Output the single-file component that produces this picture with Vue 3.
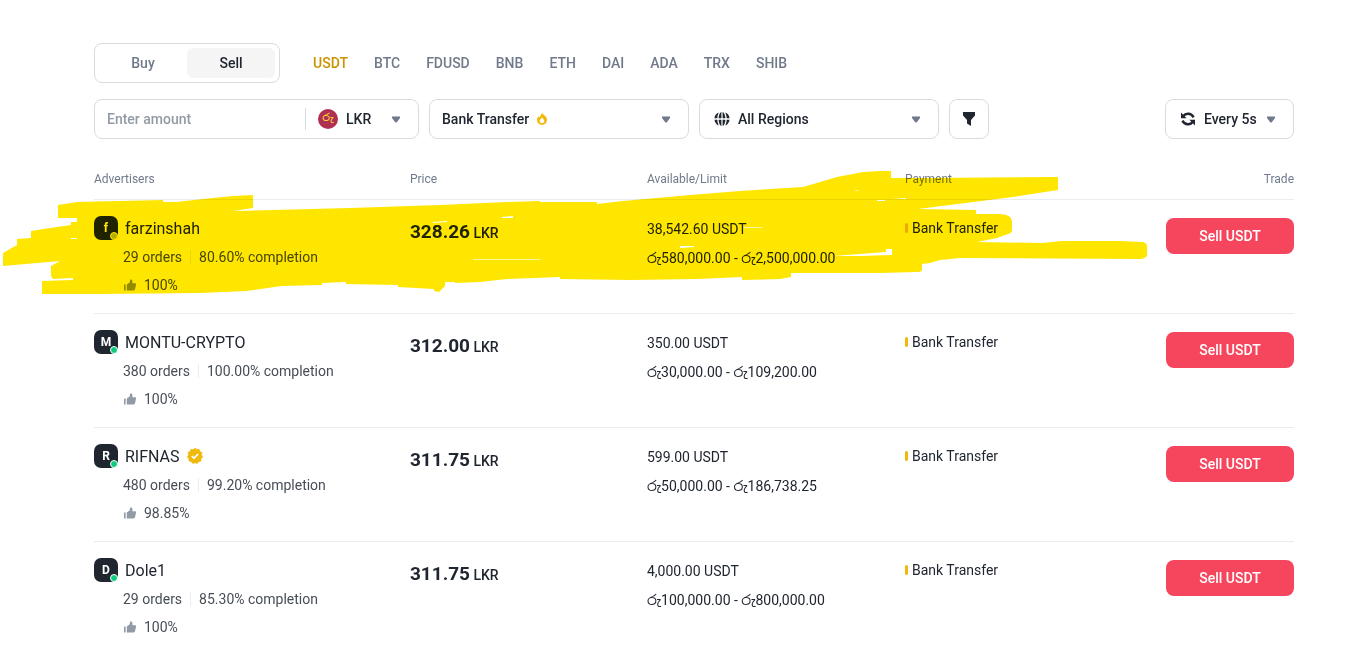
<script setup>
import { ref } from 'vue'

const sides = ['Buy', 'Sell']
const side = ref('Sell')
const coins = ['USDT', 'BTC', 'FDUSD', 'BNB', 'ETH', 'DAI', 'ADA', 'TRX', 'SHIB']
const coin = ref('USDT')
const amount = ref('')

const ads = [
  { name: 'farzinshah', orders: 29, rate: '80.60%', likes: '100%', price: '328.26', available: '38,542.60', min: '580,000.00', max: '2,500,000.00', away: true },
  { name: 'MONTU-CRYPTO', orders: 380, rate: '100.00%', likes: '100%', price: '312.00', available: '350.00', min: '30,000.00', max: '109,200.00' },
  { name: 'RIFNAS', orders: 480, rate: '99.20%', likes: '98.85%', price: '311.75', available: '599.00', min: '50,000.00', max: '186,738.25', verified: true },
  { name: 'Dole1', orders: 29, rate: '85.30%', likes: '100%', price: '311.75', available: '4,000.00', min: '100,000.00', max: '800,000.00' },
]
</script>

<template>
  <main class="page">
    <nav class="top">
      <div class="toggle">
        <button v-for="s in sides" :key="s" type="button" :class="{ on: s === side }" @click="side = s">{{ s }}</button>
      </div>
      <div class="coins">
        <button v-for="c in coins" :key="c" type="button" :class="{ on: c === coin }" @click="coin = c">{{ c }}</button>
      </div>
    </nav>

    <div class="filters">
      <div class="field amount">
        <input v-model="amount" type="text" placeholder="Enter amount" aria-label="Enter amount" />
        <div class="pick fiat">
          <span class="coin" aria-hidden="true">රු</span>
          <select aria-label="Currency"><option>LKR</option></select>
          <svg class="caret" viewBox="0 0 10 7" aria-hidden="true"><path d="M1 .5H9V2L5.8 6.2Q5 6.9 4.2 6.2L1 2Z" fill="#707a8a" /></svg>
        </div>
      </div>
      <div class="field pick method">
        <select aria-label="Payment method"><option>Bank Transfer</option></select>
        <svg class="flame" viewBox="0 0 10 12" aria-hidden="true">
          <path fill-rule="evenodd" d="M5 0L8.600 3.600C9.500 4.600 10 5.700 10 7A5 5 0 0 1 0 7C0 5.700.5 4.600 1.400 3.600L2.500 4.200ZM5 4.400L3.400 6.200A2.300 2.300 0 1 0 6.600 6.200Z" fill="#f0b90b" />
        </svg>
        <svg class="caret" viewBox="0 0 10 7" aria-hidden="true"><path d="M1 .5H9V2L5.8 6.2Q5 6.9 4.2 6.2L1 2Z" fill="#707a8a" /></svg>
      </div>
      <div class="field pick region">
        <svg class="lead" viewBox="0 0 16 16" aria-hidden="true">
          <g fill="#202630">
            <path d="M7.400 1V7.200H4.600C4.700 4.500 5.700 1.500 7.400 1ZM8.600 1V7.200H11.400C11.300 4.500 10.300 1.500 8.600 1ZM7.400 15V8.800H4.600C4.700 11.500 5.700 14.500 7.400 15ZM8.600 15V8.800H11.400C11.300 11.500 10.300 14.500 8.600 15Z" />
            <path d="M4.400 1.600V2.400C3.700 3.800 3.300 5.500 3.300 7.200H.5C.7 4.800 2.200 2.600 4.400 1.600ZM11.600 1.600V2.400C12.300 3.800 12.700 5.500 12.700 7.200H15.500C15.300 4.800 13.800 2.600 11.600 1.600ZM4.400 14.400V13.600C3.700 12.200 3.300 10.500 3.300 8.800H.5C.7 11.200 2.200 13.400 4.400 14.400ZM11.600 14.400V13.600C12.300 12.200 12.700 10.500 12.700 8.800H15.500C15.300 11.200 13.800 13.400 11.600 14.400Z" />
          </g>
        </svg>
        <select aria-label="Region"><option>All Regions</option></select>
        <svg class="caret" viewBox="0 0 10 7" aria-hidden="true"><path d="M1 .5H9V2L5.8 6.2Q5 6.9 4.2 6.2L1 2Z" fill="#707a8a" /></svg>
      </div>
      <button class="field funnel" type="button" aria-label="Filter">
        <svg viewBox="0 0 14 14" aria-hidden="true"><path d="M1 0H13V3.400L9 8V14L5 11.600V8L1 3.400Z" fill="#202630" /></svg>
      </button>
      <div class="field pick refresh">
        <svg class="lead" viewBox="0 0 16 16" aria-hidden="true">
          <path d="M3.400 5C5.400 2 11.200 1.600 13.600 6.400M12.600 11C10.600 14 4.800 14.400 2.400 9.600" fill="none" stroke="#202630" stroke-width="2.400" />
          <path d="M1 1.600V7.200H6.600ZM15 14.400V8.800H9.400Z" fill="#202630" />
        </svg>
        <select aria-label="Refresh interval"><option>Every 5s</option></select>
        <svg class="caret" viewBox="0 0 10 7" aria-hidden="true"><path d="M1 .5H9V2L5.8 6.2Q5 6.9 4.2 6.2L1 2Z" fill="#707a8a" /></svg>
      </div>
    </div>

    <table>
      <thead>
        <tr>
          <th class="c-adv">Advertisers</th>
          <th class="c-price">Price</th>
          <th class="c-limit">Available/Limit</th>
          <th>Payment</th>
          <th class="c-trade">Trade</th>
        </tr>
      </thead>
      <tbody>
        <tr v-for="ad in ads" :key="ad.name">
          <td>
            <div class="who">
              <span class="avatar">{{ ad.name[0] }}<i class="dot" :class="{ away: ad.away }"></i></span>
              <a href="#">{{ ad.name }}</a>
              <svg v-if="ad.verified" class="badge" viewBox="0 0 16 16" role="img" aria-label="Verified">
                <path d="M8 .2L9.900 1.500L12.200 1.400L13 3.500L15 4.700L14.500 7L15.600 9L14.100 10.800L13.900 13.100L11.600 13.700L10.200 15.500L8 14.800L5.800 15.500L4.400 13.700L2.100 13.100L1.900 10.800L.4 9L1.500 7L1 4.700L3 3.500L3.800 1.400L6.100 1.500Z" fill="#f0b90b" stroke="#f0b90b" stroke-width=".6" stroke-linejoin="round" />
                <path d="M4.800 8L7 10.200L11.200 6" fill="none" stroke="#fff" stroke-width="1.700" />
              </svg>
            </div>
            <div class="stats">
              <span>{{ ad.orders }} orders</span><i class="bar"></i><span>{{ ad.rate }} completion</span>
            </div>
            <div class="likes">
              <svg viewBox="0 0 12 12" aria-hidden="true"><path d="M0 5.400H1.600V11.500H0ZM2.800 5.600L5.600 3.400L6.200.4H7.200Q8.400.5 8.400 1.800V4.200H11.400Q12.200 4.600 12 5.800L11 10.200Q10.600 11.500 9.400 11.500H2.800Z" fill="#929aa5" /></svg>
              <span>{{ ad.likes }}</span>
            </div>
          </td>
          <td><div class="price"><b>{{ ad.price }}</b> <span>LKR</span></div></td>
          <td>
            <div class="avail">{{ ad.available }} USDT</div>
            <div class="limit">රු{{ ad.min }} - රු{{ ad.max }}</div>
          </td>
          <td><div class="pay">Bank Transfer</div></td>
          <td class="trade"><button type="button">Sell USDT</button></td>
        </tr>
      </tbody>
    </table>

    <svg class="marker" width="1154" height="130" viewBox="0 168 1154 130" aria-hidden="true">
      <path fill="#ffe600" d="M58 205L77 202L120 201L163 200V202L176 202L213 198L233 196L253 195V208L233 211L350 208L440 205L507 202L540 201V202H597V204L623 201L690 195L740 191L803 187L837 177L863 172L880 171H891V178L927 178L1058 177V190L1013 197L918 209L976 210V214H1000Q1012 215 1012 221V230Q1012 233 1008 234L997 238L977 242L1042 243L1062 241H1120L1143 242Q1147 243 1147 246V255Q1147 258 1140 259L960 258L940 260L930 263L922 264V270Q921 272 917 272L880 273H791V277L780 279L742 280V277L720 278L697 279L630 280L560 279V277L507 279L480 282L455 283V282L445 282V286L439 292L434 291V289L398 287V285L346 284V282L322 283V285L281 286L247 291L200 293L100 294H42V281L73 280V278L53 279L51 276V266L60 261L3 266V253L17 245V239L31 238V231L50 228L71 225V222H77V218H58Z" />
      <path fill="#fff" d="M433 222L447 221V222L433 223ZM502 217L513 216V218H502ZM680 246L694 246V247L680 248ZM833 256L860 254L886 252V249H892V255L860 256ZM854 191L858 190V191ZM877 200H885V201H877ZM892 199L906 198V199ZM71 238H77V239H71Z" />
      <path fill="#fff6a0" d="M473 259H540V260H473ZM744 227H762V228H744Z" />
    </svg>
  </main>
</template>

<style>
body {
  background: #fff;
}
</style>

<style scoped>
* {
  box-sizing: border-box;
}
.page {
  position: relative;
  padding: 43px 60px 0 94px;
  background: #fff;
  color: #202630;
  font-family: Roboto, "Noto Sans Sinhala", "Noto Sans", sans-serif;
  font-size: 14px;
  line-height: 20px;
}
button,
input,
select {
  font: inherit;
  color: inherit;
  border: 0;
  padding: 0;
  margin: 0;
  background: none;
  outline: 0;
}
button,
select {
  font-weight: 500;
  cursor: pointer;
}
.top {
  display: flex;
  align-items: center;
  gap: 33px;
}
.toggle {
  display: flex;
  height: 40px;
  padding: 4px;
  border: 1px solid #d8dce1;
  border-radius: 8px;
}
.toggle button {
  width: 88px;
  border-radius: 6px;
  color: #707a8a;
}
.toggle .on {
  background: #f5f5f5;
  color: #202630;
}
.coins {
  display: flex;
  gap: 26px;
  color: #707a8a;
}
.coins .on {
  color: #c99400;
}
.filters {
  display: flex;
  gap: 10px;
  margin-top: 16px;
}
.field {
  height: 40px;
  border: 1px solid #d8dce1;
  border-radius: 8px;
}
.pick {
  position: relative;
  display: flex;
  align-items: center;
}
.pick select {
  appearance: none;
  width: 100%;
  height: 38px;
  padding: 0 12px;
}
.caret {
  position: absolute;
  right: 17px;
  width: 10px;
  height: 7px;
  pointer-events: none;
}
.amount {
  display: flex;
  align-items: center;
  width: 325px;
}
.amount input {
  flex: 1;
  min-width: 0;
  height: 38px;
  padding: 0 12px;
}
.amount input::placeholder {
  color: #929aa5;
  font-weight: 500;
  opacity: 1;
}
.fiat {
  width: 113px;
  height: 22px;
  border-left: 1px solid #d8dce1;
}
.fiat select {
  padding-left: 40px;
}
.coin {
  position: absolute;
  left: 12px;
  width: 20px;
  height: 20px;
  border-radius: 50%;
  background: #b03052;
  color: #f8d33a;
  font-size: 11px;
  font-weight: 500;
  line-height: 18px;
  text-align: center;
  pointer-events: none;
}
.method {
  width: 260px;
}
.flame {
  position: absolute;
  left: 107px;
  width: 10px;
  height: 12px;
  pointer-events: none;
}
.region {
  width: 240px;
}
.lead {
  position: absolute;
  left: 14px;
  width: 16px;
  height: 16px;
  pointer-events: none;
}
.region select,
.refresh select {
  padding-left: 38px;
}
.funnel {
  display: flex;
  align-items: center;
  justify-content: center;
  width: 40px;
}
.funnel svg {
  width: 14px;
  height: 14px;
}
.refresh {
  width: 129px;
  margin-left: auto;
}
table {
  width: 100%;
  margin-top: 30px;
  border-collapse: collapse;
  table-layout: fixed;
}
th {
  padding: 0 0 10px;
  color: #707a8a;
  font-size: 12px;
  font-weight: 400;
  text-align: left;
}
.c-adv {
  width: 26.33%;
}
.c-price {
  width: 19.75%;
}
.c-limit {
  width: 21.5%;
}
.c-trade {
  width: 128px;
  text-align: right;
}
td {
  padding: 16px 0 18px;
  vertical-align: top;
}
thead tr,
tbody tr:not(:last-child) {
  border-bottom: 1px solid #eaecef;
}
.who {
  display: flex;
  align-items: center;
  gap: 7px;
  height: 24px;
  font-size: 16px;
}
.who a {
  color: inherit;
  line-height: 22px;
  padding-top: 2px;
  text-decoration: none;
}
.avatar {
  position: relative;
  width: 24px;
  height: 24px;
  border-radius: 7px;
  background: #202630;
  color: #fff;
  font-size: 12px;
  font-weight: 700;
  line-height: 24px;
  text-align: center;
}
.dot {
  position: absolute;
  right: 0;
  bottom: 0;
  width: 8px;
  height: 8px;
  border: 1px solid #fff;
  border-radius: 50%;
  background: #0ecb81;
}
.dot.away {
  background: #b7c0c6;
}
.badge {
  width: 16px;
  height: 16px;
}
.stats {
  display: flex;
  align-items: center;
  gap: 8px;
  margin: 7px 0 8px 29px;
  color: #474d57;
}
.bar {
  width: 1px;
  height: 14px;
  background: #eaecef;
}
.likes {
  display: flex;
  align-items: center;
  gap: 8px;
  margin-left: 30px;
  color: #474d57;
}
.likes svg {
  width: 12px;
  height: 12px;
}
.price {
  margin-top: 2px;
  line-height: 28px;
  font-weight: 500;
}
.price b {
  font-size: 19px;
  font-weight: 700;
}
.avail {
  margin: 3px 0 9px;
}
.pay {
  display: flex;
  align-items: center;
  gap: 4px;
  margin-top: 2px;
}
.pay::before {
  content: "";
  width: 3px;
  height: 10px;
  border-radius: 2px;
  background: #f0b90b;
}
.trade button {
  width: 128px;
  height: 36px;
  margin-top: 2px;
  border-radius: 8px;
  background: #f6465d;
  color: #fff;
}
.marker {
  position: absolute;
  top: 168px;
  left: 0;
  mix-blend-mode: multiply;
  pointer-events: none;
}
</style>
